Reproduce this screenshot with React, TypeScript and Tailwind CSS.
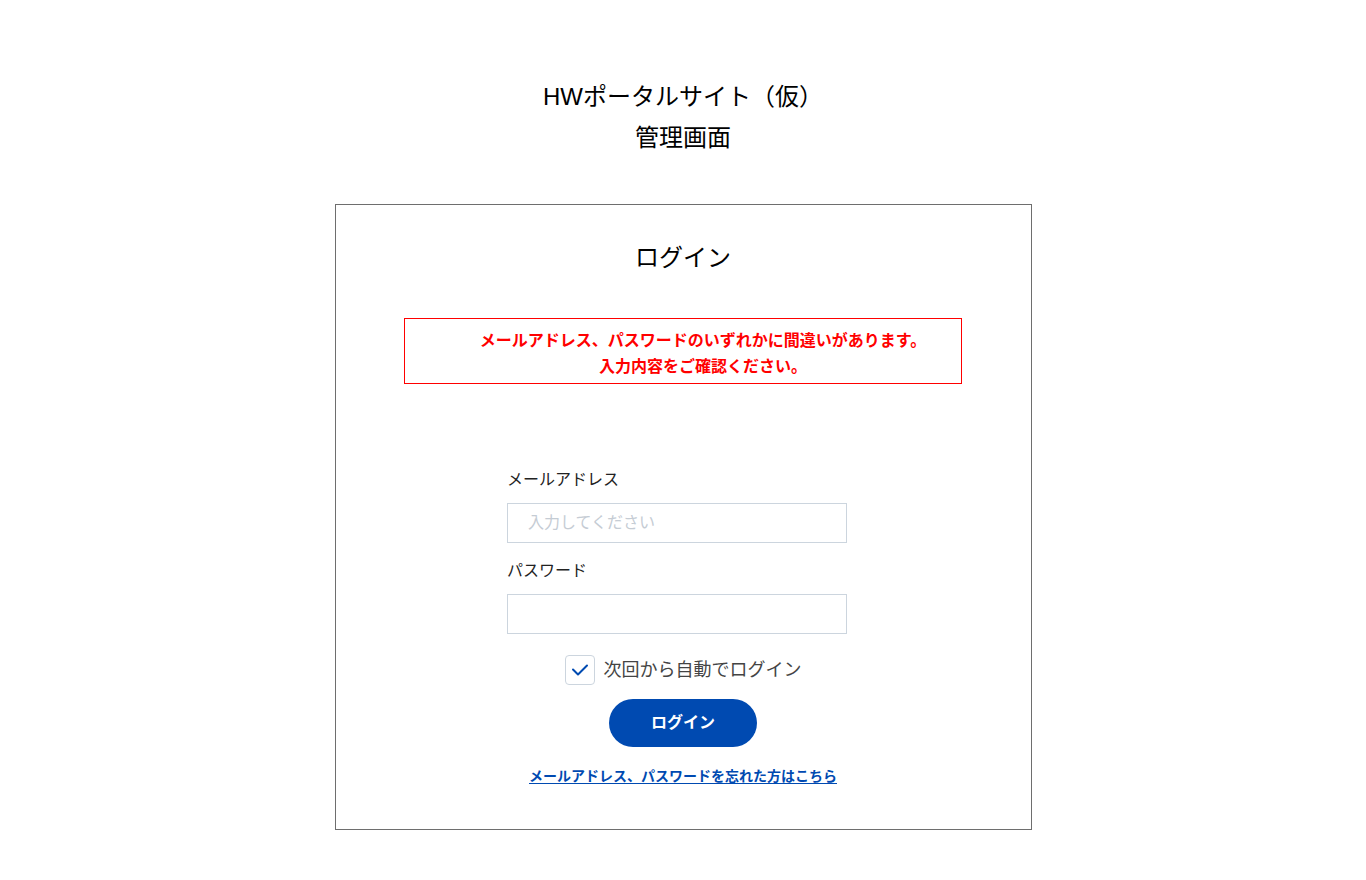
import React, { useState } from 'react';

const font = { fontFamily: '"Liberation Sans", "Noto Sans CJK JP", sans-serif' };

export default function App() {
  const [remember, setRemember] = useState(true);

  return (
    <div className="min-h-screen bg-white text-black" style={font}>
      {/* Header */}
      <div className="pt-[76px] text-center text-[24px] leading-[41px]">
        <p>HWポータルサイト（仮）</p>
        <p>管理画面</p>
      </div>

      {/* Card */}
      <div className="mx-auto mt-[46px] w-[697px] border border-[#6e6e6e] pt-[35px] pb-[43px] flex flex-col items-center">
        <h1 className="text-[24px] leading-[36px]">ログイン</h1>

        <div className="mt-[42px] w-[558px] border border-[#ff0000] pt-[9px] pb-[3px] pl-[40px] text-center text-[16px] leading-[26px] font-bold text-[#ff0000]">
          <p>メールアドレス、パスワードのいずれかに間違いがあります。</p>
          <p>入力内容をご確認ください。</p>
        </div>

        <div className="mt-[84px] w-[352px]">
          <label className="block text-[16px] leading-[24px] text-[#222]">メールアドレス</label>
          <input
            type="text"
            placeholder="入力してください"
            className="mt-[11px] block w-[340px] h-[40px] border border-[#ccd5de] px-[20px] text-[16px] placeholder:text-[#c5ccd4] outline-none"
          />
          <label className="mt-[16px] block text-[16px] leading-[24px] text-[#222]">パスワード</label>
          <input
            type="password"
            className="mt-[11px] block w-[340px] h-[40px] border border-[#ccd5de] px-[20px] text-[16px] outline-none"
          />
        </div>

        <label className="mt-[21px] flex items-center gap-[9px] cursor-pointer">
          <span
            onClick={() => setRemember(!remember)}
            className="w-[30px] h-[30px] rounded-[4px] border border-[#ccd5de] flex items-center justify-center bg-white"
          >
            {remember && (
              <svg width="18" height="12" viewBox="0 0 18 12" fill="none">
                <path d="M2 5.5 L7 10.5 L16 1.5" stroke="#004ab1" strokeWidth="2" strokeLinecap="round" strokeLinejoin="round" />
              </svg>
            )}
          </span>
          <span className="text-[18px] leading-[28px] text-[#444]">次回から自動でログイン</span>
        </label>

        <button className="mt-[14px] w-[148px] h-[48px] rounded-full bg-[#004ab1] text-white text-[16px] font-bold">
          ログイン
        </button>

        <a href="#" className="mt-[19px] text-[14px] leading-[20px] font-bold text-[#004ab1] underline underline-offset-2">
          メールアドレス、パスワードを忘れた方はこちら
        </a>
      </div>
    </div>
  );
}
